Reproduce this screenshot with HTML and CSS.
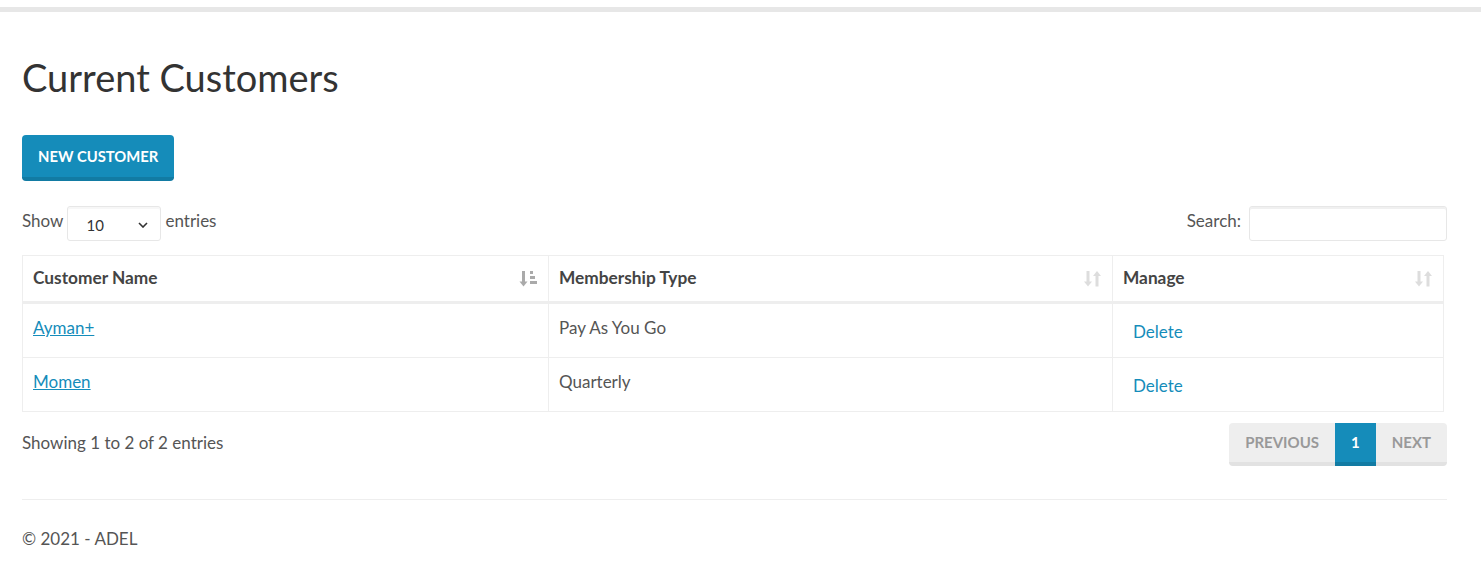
FILE: index.html
```html
<!DOCTYPE html>
<html lang="en">
<head>
<meta charset="utf-8">
<title>Current Customers</title>
<link rel="stylesheet" href="styles.css">
</head>
<body>
<div class="topbar"></div>
<main class="container">
  <h1 class="title">Current Customers</h1>
  <p class="actions"><a class="btn-primary" href="#">New Customer</a></p>

  <div class="dt-top">
    <label class="dt-length"><span class="lbl">Show</span>
      <span class="select"><span class="select-val">10</span>
        <svg class="chev" width="10" height="6" viewBox="0 0 10 6"><path d="M1 1l4 4 4-4" fill="none" stroke="#333" stroke-width="1.6"/></svg>
      </span>
      <span class="lbl">entries</span></label>
    <label class="dt-search"><span class="lbl">Search:</span> <span class="search-input"></span></label>
  </div>

  <table class="dt-table">
    <thead>
      <tr>
        <th class="col-name"><span>Customer Name</span>
          <svg class="sort" width="20" height="20" viewBox="0 0 20 20">
            <path d="M4.5 2v12" stroke="#aaa" stroke-width="3"/>
            <path d="M0.5 12.5h8L4.5 17.5z" fill="#aaa"/>
            <rect x="11" y="2" width="3" height="3" fill="#aaa"/>
            <rect x="11" y="7" width="5" height="3" fill="#aaa"/>
            <rect x="11" y="12" width="7" height="3" fill="#aaa"/>
          </svg>
        </th>
        <th class="col-type"><span>Membership Type</span>
          <svg class="sort" width="20" height="20" viewBox="0 0 20 20">
            <path d="M5 2v12" stroke="#ddd" stroke-width="3"/>
            <path d="M1 12.5h8L5 17.5z" fill="#ddd"/>
            <path d="M14 5.5v12" stroke="#ddd" stroke-width="3"/>
            <path d="M10 7h8L14 2z" fill="#ddd"/>
          </svg>
        </th>
        <th class="col-manage"><span>Manage</span>
          <svg class="sort" width="20" height="20" viewBox="0 0 20 20">
            <path d="M5 2v12" stroke="#ddd" stroke-width="3"/>
            <path d="M1 12.5h8L5 17.5z" fill="#ddd"/>
            <path d="M14 5.5v12" stroke="#ddd" stroke-width="3"/>
            <path d="M10 7h8L14 2z" fill="#ddd"/>
          </svg>
        </th>
      </tr>
    </thead>
    <tbody>
      <tr>
        <td><a class="name-link" href="#">Ayman+</a></td>
        <td>Pay As You Go</td>
        <td><a class="del-link" href="#">Delete</a></td>
      </tr>
      <tr>
        <td><a class="name-link" href="#">Momen</a></td>
        <td>Quarterly</td>
        <td><a class="del-link" href="#">Delete</a></td>
      </tr>
    </tbody>
  </table>

  <div class="dt-bottom">
    <div class="dt-info">Showing 1 to 2 of 2 entries</div>
    <ul class="pagination">
      <li class="page disabled">Previous</li>
      <li class="page active">1</li>
      <li class="page disabled">Next</li>
    </ul>
  </div>

  <hr class="sep">
  <footer class="footer">© 2021 - ADEL</footer>
</main>
</body>
</html>
```

FILE: styles.css
```css
* { box-sizing: border-box; }
body {
  margin: 0;
  font-family: Lato, "Liberation Sans", sans-serif;
  font-size: 17px;
  line-height: 24px;
  color: #555;
  background: #fff;
}
.topbar {
  margin-top: 7px;
  height: 5px;
  background: #e7e7e7;
}
.container {
  padding: 0 34px 0 22px;
}
.title {
  margin: 44px 0 0;
  font-size: 38px;
  line-height: 43px;
  font-weight: 400;
  color: #333;
}
.actions {
  margin: 36px 0 0;
  display: flex;
}
.btn-primary {
  display: inline-block;
  background: #158cba;
  color: #fff;
  text-decoration: none;
  text-transform: uppercase;
  font-weight: 700;
  font-size: 14.8px;
  line-height: 20px;
  padding: 11px 16px;
  border-bottom: 4px solid #127ba3;
  border-radius: 4px;
}
.dt-top {
  margin-top: 25px;
  display: flex;
  justify-content: space-between;
  align-items: center;
  height: 35px;
}
.dt-length, .dt-search {
  display: flex;
  align-items: center;
  gap: 4px;
}
.lbl {
  padding-bottom: 5px;
}
.select {
  width: 94px;
  height: 35px;
  border: 1px solid #e7e7e7;
  border-radius: 3px;
  box-shadow: inset 0 2px 0 rgba(0,0,0,0.03);
  display: flex;
  align-items: center;
  justify-content: space-between;
  padding: 3px 12px 0 18px;
  font-size: 15px;
  color: #333;
}
.chev { margin-top: -1px; }
.search-input {
  margin-left: 4px;
  width: 198px;
  height: 35px;
  border: 1px solid #e7e7e7;
  border-radius: 3px;
  box-shadow: inset 0 2px 0 rgba(0,0,0,0.06);
}
.dt-table {
  margin-top: 14px;
  width: calc(100% - 3px);
  border-collapse: collapse;
  border: 1px solid #eee;
}
.dt-table th {
  text-align: left;
  font-weight: 700;
  font-size: 17.3px;
  color: #444;
  padding: 10px 10px 11px;
  border: 1px solid #eee;
  border-bottom: 3px solid #eee;
  position: relative;
}
.dt-table th .sort {
  position: absolute;
  right: 9px;
  top: 13px;
}
.col-name { width: 526px; }
.col-type { width: 564px; }
.dt-table td {
  padding: 12px 10px 13px;
  border: 1px solid #eee;
  vertical-align: top;
}
.name-link {
  color: #158cba;
  text-decoration: underline;
}
.del-link {
  display: inline-block;
  padding: 4px 10px 0;
  color: #158cba;
  text-decoration: none;
}
.dt-bottom {
  margin-top: 11px;
  display: flex;
  justify-content: space-between;
  align-items: flex-start;
}
.dt-info {
  padding-top: 8px;
}
.pagination {
  list-style: none;
  margin: 0;
  padding: 0;
  display: flex;
}
.page {
  background: #eee;
  border-bottom: 4px solid #e2e2e2;
  color: #999;
  font-weight: 700;
  font-size: 15px;
  text-transform: uppercase;
  line-height: 20px;
  padding: 9px 16px 10px;
}
.page:first-child { border-radius: 4px 0 0 4px; }
.page:last-child { border-radius: 0 4px 4px 0; }
.page.active {
  background: #158cba;
  border-bottom-color: #127ba3;
  color: #fff;
}
.sep {
  margin: 33px 0 0;
  border: 0;
  border-top: 1px solid #eee;
}
.footer {
  margin-top: 27px;
}
```
